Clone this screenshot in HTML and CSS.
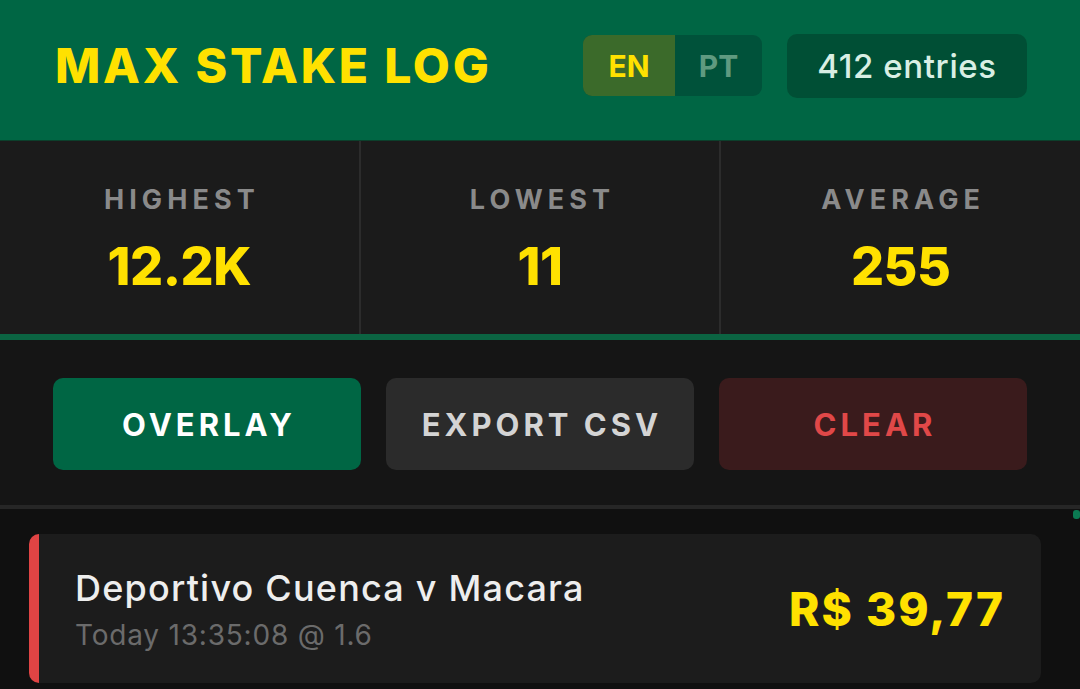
FILE: index.html
```html
<!DOCTYPE html>
<html>
<head>
<meta charset="utf-8">
<link rel="stylesheet" href="styles.css">
</head>
<body>
<div class="app">
  <header class="header">
    <h1 class="title">MAX STAKE LOG</h1>
    <div class="header-right">
      <div class="lang">
        <span class="lang-opt active">EN</span>
        <span class="lang-opt">PT</span>
      </div>
      <div class="count">412 entries</div>
    </div>
  </header>
  <section class="stats">
    <div class="stat">
      <div class="stat-label">HIGHEST</div>
      <div class="stat-value">12.2K</div>
    </div>
    <div class="stat">
      <div class="stat-label">LOWEST</div>
      <div class="stat-value">11</div>
    </div>
    <div class="stat">
      <div class="stat-label">AVERAGE</div>
      <div class="stat-value">255</div>
    </div>
  </section>
  <div class="accent-bar"></div>
  <section class="actions">
    <button class="btn btn-green">OVERLAY</button>
    <button class="btn btn-gray">EXPORT CSV</button>
    <button class="btn btn-red">CLEAR</button>
  </section>
  <section class="list">
    <div class="scroll-thumb"></div>
    <div class="entry">
      <div class="entry-info">
        <div class="entry-title">Deportivo Cuenca v Macara</div>
        <div class="entry-meta">Today 13:35:08 @ 1.6</div>
      </div>
      <div class="entry-amount">R$ 39,77</div>
    </div>
  </section>
</div>
</body>
</html>
```
FILE: styles.css
```css
* { box-sizing: border-box; margin: 0; padding: 0; }
html, body { width: 1080px; height: 689px; overflow: hidden; background: #101010; }
body { font-family: Inter, "Open Sans", sans-serif; }

.app { display: flex; flex-direction: column; height: 689px; }

.header {
  height: 141px;
  background: #006644;
  border-bottom: 1px solid #0c3f2b;
  display: flex;
  align-items: center;
  justify-content: space-between;
  padding: 0 53px 9px 55px;
}
.title {
  font-size: 48px;
  font-weight: 800;
  color: #ffe100;
  letter-spacing: 2.8px;
}
.header-right { display: flex; align-items: center; gap: 25px; }
.lang {
  display: flex;
  height: 61px;
  border-radius: 9px;
  overflow: hidden;
  background: #00523a;
}
.lang-opt {
  display: flex;
  align-items: center;
  justify-content: center;
  width: 87px;
  font-size: 30px;
  font-weight: 700;
  color: #5f9a80;
}
.lang-opt.active { width: 92px; background: #3b6a2a; color: #ffe100; }
.count {
  width: 240px;
  height: 64px;
  border-radius: 10px;
  background: #004f35;
  color: #d9efe4;
  font-size: 33px;
  font-weight: 500;
  letter-spacing: 0.6px;
  display: flex;
  align-items: center;
  justify-content: center;
}

.stats {
  height: 193px;
  display: grid;
  grid-template-columns: 1fr 1fr 1fr;
  gap: 2px;
  background: #2c2c2c;
}
.stat {
  background: #1b1b1b;
  display: flex;
  flex-direction: column;
  align-items: center;
  padding-top: 42px;
}
.stat-label {
  font-size: 27px;
  font-weight: 700;
  color: #8a8a8a;
  letter-spacing: 5.1px;
  margin-right: -5.1px;
}
.stat-value {
  margin-top: 19px;
  font-size: 52px;
  font-weight: 800;
  color: #ffe100;
  letter-spacing: -0.5px;
}

.accent-bar { height: 6px; background: #0b6442; }

.actions {
  background: #151515;
  display: grid;
  grid-template-columns: 1fr 1fr 1fr;
  gap: 25px;
  padding: 38px 53px 35px 53px;
  border-bottom: 4px solid #262626;
}
.btn {
  height: 92px;
  border: none;
  border-radius: 10px;
  font-family: Inter, "Open Sans", sans-serif;
  font-size: 31px;
  font-weight: 700;
  letter-spacing: 4px;
  text-indent: 4px;
}
.btn-green { background: #006644; color: #ffffff; }
.btn-gray { background: #2b2b2b; color: #d4d4d4; }
.btn-red { background: #3a1b1c; color: #e04848; }

.list {
  flex: 1;
  position: relative;
  background: #101010;
  padding: 25px 39px 0 29px;
}
.scroll-thumb {
  position: absolute;
  right: 0;
  top: 1px;
  width: 7px;
  height: 9px;
  border-radius: 3px;
  background: #0b7a52;
}
.entry {
  height: 149px;
  background: #1c1c1c;
  border-left: 10px solid #e04444;
  border-radius: 10px;
  display: flex;
  align-items: center;
  justify-content: space-between;
  padding: 0 36px 0 36px;
}
.entry-title {
  font-size: 36px;
  font-weight: 500;
  color: #eeeeee;
  letter-spacing: 1.2px;
}
.entry-meta {
  margin-top: 8px;
  font-size: 28px;
  font-weight: 400;
  color: #6b6b6b;
  letter-spacing: 0.8px;
}
.entry-amount {
  font-size: 46px;
  font-weight: 800;
  color: #ffe100;
  letter-spacing: 2px;
}
```
